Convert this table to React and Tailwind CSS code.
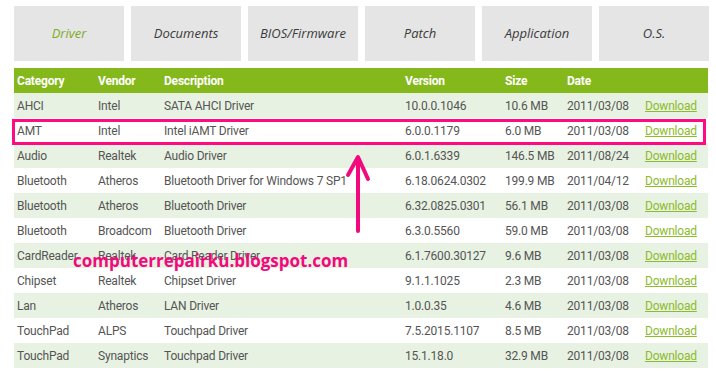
import React from 'react';

const tabs = ['Driver', 'Documents', 'BIOS/Firmware', 'Patch', 'Application', 'O.S.'];

const rows = [
  ['AHCI', 'Intel', 'SATA AHCI Driver', '10.0.0.1046', '10.6 MB', '2011/03/08'],
  ['AMT', 'Intel', 'Intel iAMT Driver', '6.0.0.1179', '6.0 MB', '2011/03/08'],
  ['Audio', 'Realtek', 'Audio Driver', '6.0.1.6339', '146.5 MB', '2011/08/24'],
  ['Bluetooth', 'Atheros', 'Bluetooth Driver for Windows 7 SP1', '6.18.0624.0302', '199.9 MB', '2011/04/12'],
  ['Bluetooth', 'Atheros', 'Bluetooth Driver', '6.32.0825.0301', '56.1 MB', '2011/03/08'],
  ['Bluetooth', 'Broadcom', 'Bluetooth Driver', '6.3.0.5560', '59.0 MB', '2011/03/08'],
  ['CardReader', 'Realtek', 'Card Reader Driver', '6.1.7600.30127', '9.6 MB', '2011/03/08'],
  ['Chipset', 'Realtek', 'Chipset Driver', '9.1.1.1025', '2.3 MB', '2011/03/08'],
  ['Lan', 'Atheros', 'LAN Driver', '1.0.0.35', '4.6 MB', '2011/03/08'],
  ['TouchPad', 'ALPS', 'Touchpad Driver', '7.5.2015.1107', '8.5 MB', '2011/03/08'],
  ['TouchPad', 'Synaptics', 'Touchpad Driver', '15.1.18.0', '32.9 MB', '2011/03/08'],
];

const cols = 'grid grid-cols-[81px_66px_241px_100px_62px_78px_1fr] pl-[3px] items-center';

export default function App() {
  return (
    <div
      className="relative w-[716px] h-[373px] bg-white overflow-hidden pt-[6px] pl-[14px]"
      style={{ fontFamily: 'Roboto, "Open Sans", sans-serif' }}
    >
      {/* Tabs */}
      <div className="flex gap-[7px]">
        {tabs.map((t, i) => (
          <div
            key={t}
            className={`w-[110px] h-[55px] bg-[#e5e5e5] flex items-center justify-center italic text-[13px] ${
              i === 0 ? 'text-[#7dac26]' : 'text-[#3b3b3b]'
            }`}
            style={{ fontFamily: '"Open Sans", sans-serif' }}
          >
            {t}
          </div>
        ))}
      </div>

      {/* Table */}
      <div className="w-[694px] mt-[7px] text-[12px] tracking-[-0.2px] text-[#555]">
        <div className={`${cols} h-[25px] bg-[#84b81b] text-white font-bold`}>
          <span>Category</span>
          <span>Vendor</span>
          <span>Description</span>
          <span>Version</span>
          <span>Size</span>
          <span>Date</span>
          <span />
        </div>
        {rows.map((r, i) => (
          <div key={i} className={`${cols} h-[25px] ${i % 2 === 0 ? 'bg-[#e8f2e2]' : 'bg-white'}`}>
            {r.map((c, j) => (
              <span key={j} className="whitespace-nowrap">{c}</span>
            ))}
            <a href="#" className="text-[#8cbb2b] underline">Download</a>
          </div>
        ))}
      </div>

      {/* Highlight box */}
      <div className="absolute left-[12px] top-[119px] w-[694px] h-[26px] border-[3px] border-[#ff0a80]" />

      {/* Arrow */}
      <svg className="absolute left-[340px] top-[150px]" width="40" height="90" viewBox="0 0 40 90">
        <path
          d="M18 8 L18 81 M8 25 L18 7 L28 29"
          fill="none"
          stroke="#f2097d"
          strokeWidth="4"
          strokeLinecap="round"
          strokeLinejoin="round"
        />
      </svg>

      {/* Watermark */}
      <div
        className="absolute left-[73px] top-[252px] text-[17px] font-bold text-[#f2097d] leading-none"
        style={{ fontFamily: '"Open Sans", sans-serif' }}
      >
        computerrepairku.blogspot.com
      </div>
    </div>
  );
}
